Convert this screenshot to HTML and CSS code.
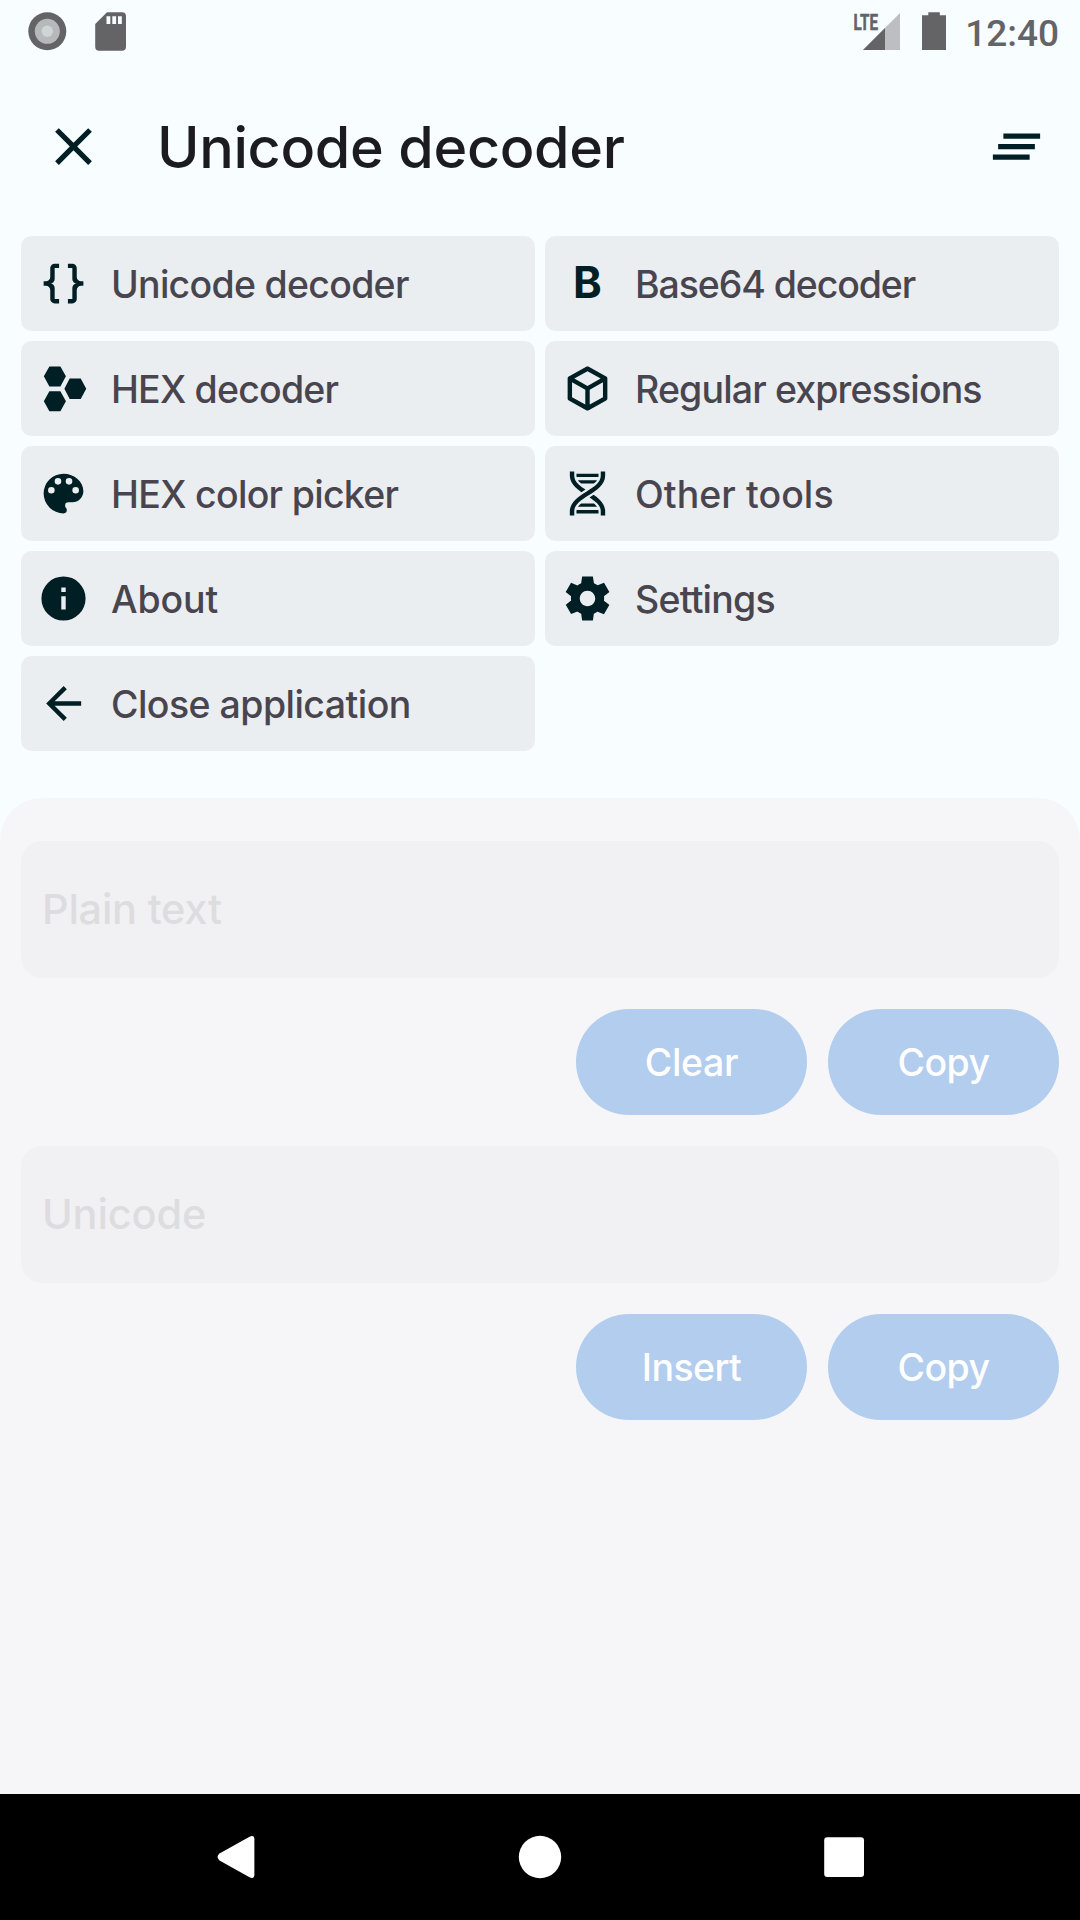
FILE: index.html
```html
<!DOCTYPE html>
<html lang="en">
<head>
<meta charset="utf-8">
<title>Unicode decoder</title>
<link rel="stylesheet" href="styles.css">
</head>
<body>
<div class="screen">
  <header class="status">
    <svg class="status-left" width="150" height="63" viewBox="0 0 150 63">
      <circle cx="47.3" cy="31.3" r="19" fill="#646466"/>
      <circle cx="47.3" cy="31.3" r="12.5" fill="#b6b9ba"/>
      <circle cx="47.3" cy="31.3" r="5.7" fill="#d0d4d6"/>
      <path fill="#646466" d="M107 12.300h15a4 4 0 0 1 4 4v30.400a4 4 0 0 1-4 4H99.200a4 4 0 0 1-4-4V24z"/>
      <path fill="#f8fdff" d="M106.500 16.200h3.800v7.800h-3.800zM112.300 16.200h3.800v7.800h-3.800zM118 16.200h3.800v7.800H118z"/>
    </svg>
    <svg class="status-right" width="106" height="63" viewBox="0 0 106 63">
      <text class="lte" x="3.500" y="30" textLength="24.500" lengthAdjust="spacingAndGlyphs">LTE</text>
      <path fill="#bcbec2" d="M50 13v37H13z"/>
      <path fill="#646466" d="M35 28v22H13z"/>
      <path fill="#646466" d="M78.300 12.200h11.500v3H96V50H72V15.200h6.300z"/>
    </svg>
    <span class="clock">12:40</span>
  </header>

  <div class="appbar">
    <svg class="bar-icon" viewBox="0 0 24 24"><path d="M19 6.410L17.590 5 12 10.590 6.410 5 5 6.410 10.590 12 5 17.590 6.410 19 12 13.410 17.590 19 19 17.590 13.410 12z"/></svg>
    <h1 class="title">Unicode decoder</h1>
    <svg class="bar-icon" viewBox="0 0 24 24"><path d="M5 13h14v-2H5v2zm-2 4h14v-2H3v2zM7 7v2h14V7H7z"/></svg>
  </div>

  <nav class="menu">
    <a class="item"><svg class="icon" viewBox="0 0 24 24"><path d="M8,3A2,2 0 0,0 6,5V9A2,2 0 0,1 4,11H3V13H4A2,2 0 0,1 6,15V19A2,2 0 0,0 8,21H10V19H8V14A2,2 0 0,0 6,12A2,2 0 0,0 8,10V5H10V3M16,3A2,2 0 0,1 18,5V9A2,2 0 0,0 20,11H21V13H20A2,2 0 0,0 18,15V19A2,2 0 0,1 16,21H14V19H16V14A2,2 0 0,1 18,12A2,2 0 0,1 16,10V5H14V3H16Z"/></svg><span class="label t-unicode">Unicode decoder</span></a>
    <a class="item"><span class="icon letter">B</span><span class="label t-base">Base64 decoder</span></a>
    <a class="item"><svg class="icon" viewBox="0 0 24 24"><path d="M5.600 2h5L13.100 6.500 10.600 11.100h-5L3.100 6.500zM14.800 7.500h5L22.300 12.100 19.800 16.800h-5L12.400 12.100zM5.600 13.300h5L13.100 17.800 10.600 22.300h-5L3.100 17.800z"/></svg><span class="label t-hex">HEX decoder</span></a>
    <a class="item"><svg class="icon" viewBox="0 0 24 24"><path d="M21,16.5C21,16.88 20.79,17.21 20.47,17.38L12.57,21.82C12.41,21.94 12.21,22 12,22C11.79,22 11.59,21.94 11.43,21.82L3.53,17.38C3.21,17.21 3,16.88 3,16.5V7.5C3,7.12 3.21,6.79 3.53,6.62L11.43,2.18C11.59,2.06 11.79,2 12,2C12.21,2 12.41,2.06 12.57,2.18L20.47,6.62C20.79,6.79 21,7.12 21,7.5V16.5M12,4.15L6.04,7.5L12,10.85L17.96,7.5L12,4.15M5,15.91L11,19.29V12.58L5,9.21V15.91M19,15.91V9.21L13,12.58V19.29L19,15.91Z"/></svg><span class="label t-regex">Regular expressions</span></a>
    <a class="item"><svg class="icon" viewBox="0 0 24 24"><path d="M17.5,12A1.5,1.5 0 0,1 16,10.5A1.5,1.5 0 0,1 17.5,9A1.5,1.5 0 0,1 19,10.5A1.5,1.5 0 0,1 17.5,12M14.5,8A1.5,1.5 0 0,1 13,6.5A1.5,1.5 0 0,1 14.5,5A1.5,1.5 0 0,1 16,6.5A1.5,1.5 0 0,1 14.5,8M9.5,8A1.5,1.5 0 0,1 8,6.5A1.5,1.5 0 0,1 9.5,5A1.5,1.5 0 0,1 11,6.5A1.5,1.5 0 0,1 9.5,8M6.5,12A1.5,1.5 0 0,1 5,10.5A1.5,1.5 0 0,1 6.5,9A1.5,1.5 0 0,1 8,10.5A1.5,1.5 0 0,1 6.5,12M12,3A9,9 0 0,0 3,12A9,9 0 0,0 12,21A1.5,1.5 0 0,0 13.5,19.5C13.5,19.11 13.35,18.76 13.11,18.5C12.88,18.23 12.73,17.88 12.73,17.5A1.5,1.5 0 0,1 14.23,16H16A5,5 0 0,0 21,11C21,6.58 16.97,3 12,3Z"/></svg><span class="label t-picker">HEX color picker</span></a>
    <a class="item"><svg class="icon" viewBox="0 0 24 24"><path d="M4,2H6V4C6,5.44 6.68,6.61 7.88,7.78C8.74,8.61 9.89,9.41 11.09,10.2L9.26,11.39C8.27,10.72 7.31,10 6.5,9.21C5.07,7.82 4,6.1 4,4V2M18,2H20V4C20,6.1 18.93,7.82 17.5,9.21C16.09,10.58 14.29,11.73 12.54,12.84C10.79,13.96 9.09,15.05 7.88,16.22C6.68,17.39 6,18.56 6,20V22H4V20C4,17.9 5.07,16.18 6.5,14.79C7.91,13.42 9.71,12.27 11.46,11.16C13.21,10.04 14.91,8.95 16.12,7.78C17.32,6.61 18,5.44 18,4V2M14.74,12.61C15.73,13.28 16.69,14 17.5,14.79C18.93,16.18 20,17.9 20,20V22H18V20C18,18.56 17.32,17.39 16.12,16.22C15.26,15.39 14.11,14.59 12.91,13.8L14.74,12.61M7,3H17V4L16.94,4.5H7.06L7,4V3M7.68,6H16.32C16.08,6.34 15.8,6.69 15.42,7.06L14.91,7.5H9.07L8.58,7.06C8.2,6.69 7.92,6.34 7.68,6M9.09,16.5H14.93L15.42,16.94C15.8,17.31 16.08,17.66 16.32,18H7.68C7.92,17.66 8.2,17.31 8.58,16.94L9.09,16.5M7.06,19.5H16.94L17,20V21H7V20L7.06,19.5Z"/></svg><span class="label t-other">Other tools</span></a>
    <a class="item"><svg class="icon" viewBox="0 0 24 24"><path d="M13,9H11V7H13M13,17H11V11H13M12,2A10,10 0 0,0 2,12A10,10 0 0,0 12,22A10,10 0 0,0 22,12A10,10 0 0,0 12,2Z"/></svg><span class="label t-about">About</span></a>
    <a class="item"><svg class="icon" viewBox="0 0 24 24"><path d="M19.44 12.99l.01-.02c.04-.32.08-.64.08-.98 0-.34-.03-.66-.07-.99l.01.02 2.44-1.92-2.43-4.22-2.87 1.16.01.01c-.52-.4-1.09-.74-1.71-1h.01L14.44 2H9.57l-.44 3.07h.01c-.62.26-1.19.6-1.71 1l.01-.01-2.88-1.17-2.44 4.22 2.44 1.92.01-.02c-.04.33-.07.65-.07.99 0 .34.03.66.08.98l-.01-.02-2.1 1.65-.33.26 2.43 4.2 2.88-1.15-.02-.04c.53.41 1.1.75 1.73 1.01h-.03L9.58 22h4.85s.03-.18.06-.42l.38-2.65h-.01c.62-.26 1.2-.6 1.73-1.01l-.02.04 2.88 1.15 2.43-4.2s-.14-.12-.33-.26l-2.11-1.66zM12 15.5c-1.93 0-3.500-1.570-3.500-3.500s1.570-3.500 3.500-3.500 3.500 1.570 3.500 3.500-1.570 3.500-3.500 3.500z"/></svg><span class="label t-settings">Settings</span></a>
    <a class="item"><svg class="icon" viewBox="0 0 24 24"><path d="M20,11V13H8L13.5,18.5L12.08,19.92L4.16,12L12.08,4.08L13.5,5.5L8,11H20Z"/></svg><span class="label t-close">Close application</span></a>
  </nav>

  <main class="panel">
    <div class="field t-plain">Plain text</div>
    <div class="actions"><button class="btn t-clear">Clear</button><button class="btn t-copy">Copy</button></div>
    <div class="field t-code">Unicode</div>
    <div class="actions"><button class="btn t-insert">Insert</button><button class="btn t-copy">Copy</button></div>
  </main>

  <footer class="navbar">
    <svg width="60" height="60" viewBox="0 0 60 60"><path d="M13.500 26.600 43.500 9.700Q48.400 7.500 48.400 12.500V47.500Q48.400 52.500 43.500 50.300L13.500 33.400Q9.500 30 13.500 26.600z"/></svg>
    <svg width="60" height="60" viewBox="0 0 60 60"><circle cx="30" cy="30" r="21.200"/></svg>
    <svg width="60" height="60" viewBox="0 0 60 60"><rect x="10.200" y="10.200" width="39.800" height="39.800" rx="3"/></svg>
  </footer>
</div>
</body>
</html>
```
FILE: styles.css
```css
* { box-sizing: border-box; }

body {
  margin: 0;
  font-family: Inter, "Noto Sans", sans-serif;
  font-weight: 500;
  background: #f8fdff;
}

.screen {
  width: 1080px;
  height: 1920px;
  display: flex;
  flex-direction: column;
  overflow: hidden;
}

.status {
  height: 63px;
  display: flex;
  padding-right: 21px;
}

.status-right {
  margin-left: auto;
  margin-right: 1px;
}

.lte {
  font: 700 22px Roboto, sans-serif;
  fill: #646466;
  stroke: #646466;
  stroke-width: 0.6px;
}

.clock {
  width: 102px;
  text-align: right;
  font: 500 37px/67px Roboto, sans-serif;
  color: #646466;
}

.appbar {
  height: 165px;
  display: flex;
  align-items: center;
  padding: 2px 32px 0 42px;
}

.bar-icon {
  width: 63px;
  height: 63px;
  fill: #001f25;
}

.title {
  flex: 1;
  margin: 0 0 0 52px;
  font-size: 57.5px;
  font-weight: 500;
  line-height: 80px;
  letter-spacing: -0.36px;
  color: #1c1b1f;
}

.menu {
  display: grid;
  grid-template-columns: 1fr 1fr;
  grid-auto-rows: 95px;
  gap: 10px;
  padding: 8px 21px 47px;
}

.item {
  display: flex;
  align-items: center;
  gap: 21px;
  padding-left: 16px;
  border-radius: 10.5px;
  background: #ebeef1;
}

.icon {
  width: 53px;
  height: 53px;
  fill: #001f25;
}

.letter {
  font-size: 43.5px;
  font-weight: 700;
  line-height: 50px;
  text-align: center;
  color: #001f25;
}

.label {
  padding-top: 1px;
  font-size: 37.5px;
  white-space: nowrap;
  color: #49454f;
}

.t-unicode { letter-spacing: -0.72px; }
.t-base { letter-spacing: -1.1px; }
.t-hex { letter-spacing: -0.8px; }
.t-regex { letter-spacing: -0.87px; }
.t-picker { letter-spacing: -0.7px; }
.t-other { letter-spacing: 0.06px; }
.t-about { letter-spacing: -0.1px; }
.t-settings { letter-spacing: -0.78px; }
.t-close { letter-spacing: -0.55px; }
.t-plain { letter-spacing: -0.25px; }
.t-code { letter-spacing: -0.15px; }
.t-clear { letter-spacing: -0.35px; }
.t-copy { letter-spacing: -0.5px; }
.t-insert { letter-spacing: -0.6px; }

.panel {
  flex: 1;
  display: flex;
  flex-direction: column;
  padding: 43px 21px 0;
  border-radius: 42px 42px 0 0;
  background: #f6f6f8;
}

.field {
  height: 137px;
  padding-left: 21px;
  border-radius: 21px;
  background: #f1f1f3;
  font-size: 41.5px;
  line-height: 137px;
  color: #dddddf;
}

.actions {
  display: flex;
  justify-content: flex-end;
  gap: 21px;
  padding: 31px 0;
}

.btn {
  width: 231px;
  height: 106px;
  padding: 0;
  border: 0;
  border-radius: 53px;
  background: #b2cdee;
  font-family: inherit;
  font-size: 37.5px;
  font-weight: 500;
  color: #fff;
}

.navbar {
  height: 126px;
  display: flex;
  align-items: center;
  justify-content: center;
  gap: 244px;
  background: #000;
  fill: #fff;
}
```
